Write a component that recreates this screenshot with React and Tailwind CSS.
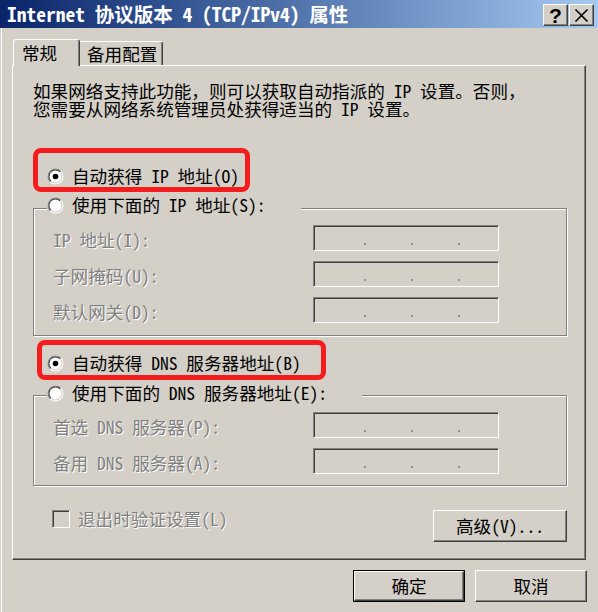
import React from "react";

const raised =
  "border border-t-white border-l-white border-r-[#404040] border-b-[#404040] shadow-[inset_-1px_-1px_0_#808080]";
const sunken =
  "border border-t-[#808080] border-l-[#808080] border-r-white border-b-white";
const dim = "text-[#808080] [text-shadow:1px_1px_0_#fff]";

function Radio({ checked }) {
  return (
    <svg width="17" height="17" viewBox="0 0 17 17" className="shrink-0">
      <circle cx="8.5" cy="8.5" r="8" fill="#fff" />
      <path d="M2.843 14.157 A8 8 0 0 1 14.157 2.843 Z" fill="#808080" />
      <circle cx="8.5" cy="8.5" r="7" fill="#d4d0c8" />
      <path d="M3.55 13.45 A7 7 0 0 1 13.45 3.55 Z" fill="#404040" />
      <circle cx="8.5" cy="8.5" r="6" fill="#fff" />
      {checked && <circle cx="8.5" cy="8.5" r="2.8" fill="#000" />}
    </svg>
  );
}

function IpBox() {
  return (
    <div className={`${sunken} shadow-[inset_1px_1px_0_#404040] w-[186px] h-[26px] flex items-end pb-[5px] pl-[50px] gap-[45px]`}>
      {[0, 1, 2].map((i) => (
        <span key={i} className="w-[2px] h-[2px] bg-[#909090]" />
      ))}
    </div>
  );
}

function Field({ label }) {
  return (
    <div className="flex items-center h-[26px]">
      <span className={`w-[279px] pl-[19px] pt-[4px] whitespace-nowrap ${dim}`}>{label}</span>
      <IpBox />
    </div>
  );
}

function Mark({ className }) {
  return <div className={`absolute border-[5px] border-[#f41c1c] rounded-[8px] pointer-events-none ${className}`} />;
}

export default function App() {
  return (
    <div className="w-[598px] h-[612px] bg-[#d4d0c8] flex flex-col overflow-hidden text-black text-[17.6px] leading-[20px] font-['Noto_Sans_Mono_CJK_SC','Noto_Sans_CJK_SC',sans-serif]">
      {/* title bar */}
      <div className="h-[28px] shrink-0 flex items-start bg-linear-to-r from-[#0a246a] to-[#a6caf0] pl-[7px] pr-[4px]">
        <span className="self-center text-white font-bold text-[19.5px] leading-none whitespace-nowrap">
          Internet 协议版本 4 (TCP/IPv4) 属性
        </span>
        <div className="ml-auto mt-[4px] flex gap-[1px]">
          <div className={`${raised} bg-[#d4d0c8] w-[25px] h-[22px] flex items-center justify-center`}>
            <span className="font-['Liberation_Sans'] font-bold text-[21px] leading-none">?</span>
          </div>
          <div className={`${raised} bg-[#d4d0c8] w-[25px] h-[22px] flex items-center justify-center`}>
            <svg width="15" height="13" viewBox="0 0 15 13">
              <path d="M1.5 0.5 L13.5 12.5 M13.5 0.5 L1.5 12.5" stroke="#000" strokeWidth="1.6" />
            </svg>
          </div>
        </div>
      </div>

      <div className="flex-1 flex flex-col pl-[12px] shadow-[inset_1px_0_0_#d4d0c8,inset_2px_0_0_#fff]">
        {/* tabs */}
        <div className="mt-[11px] h-[26px] flex items-end relative z-10">
          <div className="ml-[1px] w-[67px] h-[27px] -mb-[1px] bg-[#d4d0c8] border-t border-l border-white border-r border-r-[#404040] shadow-[inset_-1px_0_0_#808080] rounded-t-[3px] flex items-center pl-[8px]">
            常规
          </div>
          <div className="w-[83px] h-[24px] border-t border-t-white border-r border-r-[#404040] shadow-[inset_-1px_0_0_#808080] rounded-tr-[3px] flex items-center pl-[7px]">
            备用配置
          </div>
        </div>

        {/* panel */}
        <div className={`${raised} w-[574px] h-[495px] flex flex-col pt-[16px] pl-[20px] pr-[18px]`}>
          <p className="leading-[18px] whitespace-nowrap">
            如果网络支持此功能，则可以获取自动指派的 IP 设置。否则，
            <br />
            您需要从网络系统管理员处获得适当的 IP 设置。
          </p>

          <div className="relative mt-[48px] h-[20px] flex items-center gap-[8px] pl-[14px]">
            <Radio checked />
            <span className="whitespace-nowrap">自动获得 IP 地址(O)</span>
            <Mark className="left-0 top-[-18px] w-[217px] h-[44px]" />
          </div>

          <div className="mt-[22px] border border-[#808080] shadow-[inset_1px_1px_0_#fff,1px_1px_0_#fff] flex flex-col pb-[12px]">
            <div className="-mt-[14px] ml-[13px] h-[20px] self-start bg-[#d4d0c8] flex items-center gap-[8px] pr-[35px]">
              <Radio />
              <span className="whitespace-nowrap">使用下面的 IP 地址(S):</span>
            </div>
            <div className="mt-[10px] flex flex-col gap-[10px]">
              <Field label="IP 地址(I):" />
              <Field label="子网掩码(U):" />
              <Field label="默认网关(D):" />
            </div>
          </div>

          <div className="relative mt-[17px] h-[20px] flex items-center gap-[8px] pl-[14px]">
            <Radio checked />
            <span className="whitespace-nowrap">自动获得 DNS 服务器地址(B)</span>
            <Mark className="left-[4px] top-[-13px] w-[289px] h-[40px]" />
          </div>

          <div className="mt-[22px] border border-[#808080] shadow-[inset_1px_1px_0_#fff,1px_1px_0_#fff] flex flex-col pb-[11px]">
            <div className="-mt-[13px] ml-[13px] h-[20px] self-start bg-[#d4d0c8] flex items-center gap-[8px] pr-[35px]">
              <Radio />
              <span className="whitespace-nowrap">使用下面的 DNS 服务器地址(E):</span>
            </div>
            <div className="mt-[9px] flex flex-col gap-[10px]">
              <Field label="首选 DNS 服务器(P):" />
              <Field label="备用 DNS 服务器(A):" />
            </div>
          </div>

          <div className="mt-[24px] h-[32px] flex items-start justify-between">
            <div className="pl-[19px] flex items-center gap-[8px] h-[18px]">
              <div className={`${sunken} shadow-[inset_1px_1px_0_#404040,inset_-1px_-1px_0_#d4d0c8] w-[18px] h-[18px] bg-[#d4d0c8]`} />
              <span className={`whitespace-nowrap ${dim}`}>退出时验证设置(L)</span>
            </div>
            <div className={`${raised} w-[134px] h-[32px] flex items-center justify-center`}>
              高级(V)...
            </div>
          </div>
        </div>

        {/* dialog buttons */}
        <div className="mt-[10px] flex justify-end gap-[10px] pr-[11px]">
          <div className="w-[112px] h-[32px] border border-black">
            <div className={`${raised} w-full h-full flex items-center justify-center`}>确定</div>
          </div>
          <div className={`${raised} w-[112px] h-[32px] flex items-center justify-center`}>取消</div>
        </div>
      </div>
    </div>
  );
}
